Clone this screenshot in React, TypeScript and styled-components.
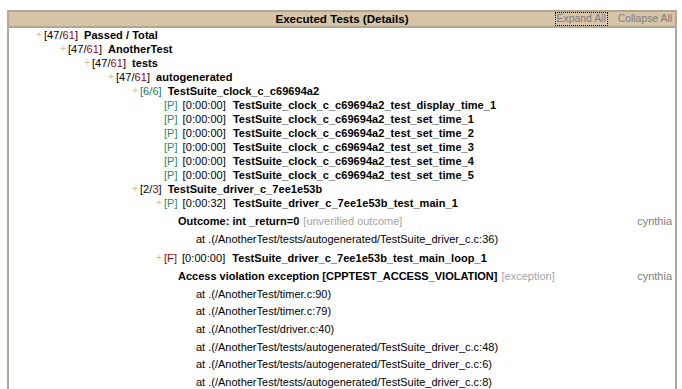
import React from 'react';
import styled, { createGlobalStyle } from 'styled-components';

const Global = createGlobalStyle`
  html, body { margin: 0; padding: 0; background: #fff; }
  body {
    font-family: "Liberation Sans", Arial, sans-serif;
    font-size: 11px;
    color: #000;
    overflow: hidden;
  }
`;

const Panel = styled.div`
  margin: 10px 0 0 7px;
  width: 670px;
  height: 420px;
  box-sizing: border-box;
  border-left: 2px solid #b8a793;
  border-right: 2px solid #b8a793;
  background: #fff;
`;

const Header = styled.div`
  display: grid;
  grid-template-columns: 1fr auto 1fr;
  align-items: center;
  height: 14px;
  background: #d6c4a8;
  border-top: 2px solid #b5a48e;
  border-bottom: 2px solid #b5a48e;
`;

const Title = styled.div`
  grid-column: 2;
  font-weight: bold;
  font-size: 11.6px;
  line-height: 14px;
`;

const Links = styled.div`
  grid-column: 3;
  justify-self: end;
  display: flex;
  align-items: center;
  gap: 10px;
  padding-right: 2px;
`;

const LinkButton = styled.span<{ $focused?: boolean }>`
  color: #7c7c7c;
  font-size: 10.4px;
  line-height: 12px;
  padding: 0 1px;
  outline: ${(p) => (p.$focused ? '1px dotted #000' : 'none')};
`;

const Tree = styled.div`
  display: flex;
  flex-direction: column;
`;

const Row = styled.div<{ $level: number }>`
  display: flex;
  align-items: center;
  height: 14px;
  line-height: 14px;
  white-space: nowrap;
  letter-spacing: 0.05px;
  padding-left: ${(p) => 27 + p.$level * 24}px;
`;

const Toggle = styled.span<{ $hidden?: boolean }>`
  width: 8px;
  flex: none;
  color: #cbbfb2;
  font-size: 10px;
  visibility: ${(p) => (p.$hidden ? 'hidden' : 'visible')};
`;

const Count = styled.span<{ $ok: boolean }>`
  margin-right: 6px;
  color: ${(p) => (p.$ok ? '#1f6f6a' : '#000')};
`;

const Total = styled.span<{ $ok: boolean }>`
  color: ${(p) => (p.$ok ? '#2e8b3a' : '#8b0a0a')};
`;

const Status = styled.span<{ $pass: boolean }>`
  margin-right: 5px;
  color: ${(p) => (p.$pass ? '#1f8a6a' : '#8b0a0a')};
`;

const Time = styled.span`
  margin-right: 7px;
`;

const Name = styled.span`
  font-weight: bold;
`;

const Details = styled.div<{ $last?: boolean }>`
  display: flex;
  flex-direction: column;
  padding: 2px 3px ${(p) => (p.$last ? 0 : 3)}px 169px;
`;

const MessageRow = styled.div`
  display: flex;
  align-items: center;
  justify-content: space-between;
  height: 18px;
  white-space: nowrap;
`;

const Message = styled.span`
  font-weight: bold;
`;

const Tag = styled.span`
  font-weight: normal;
  color: #a4a4a4;
  margin-left: 4px;
`;

const Author = styled.span`
  color: #7c7c7c;
`;

const StackRow = styled.div`
  display: flex;
  align-items: center;
  height: 17.7px;
  padding-left: 18px;
  white-space: nowrap;
`;

type Detail = { message: string; tag: string; author: string; stack: string[] };

const CountLabel = ({ pass, total }: { pass: number; total: number }) => {
  const ok = pass === total;
  return (
    <Count $ok={ok}>
      [{pass}/<Total $ok={ok}>{total}</Total>]
    </Count>
  );
};

const GroupRow = ({ level, pass, total, name }: { level: number; pass: number; total: number; name: string }) => (
  <Row $level={level}>
    <Toggle>+</Toggle>
    <CountLabel pass={pass} total={total} />
    <Name>{name}</Name>
  </Row>
);

const TestRow = ({
  level,
  pass,
  time,
  name,
  expandable,
}: {
  level: number;
  pass: boolean;
  time: string;
  name: string;
  expandable?: boolean;
}) => (
  <Row $level={level}>
    <Toggle $hidden={!expandable}>+</Toggle>
    <Status $pass={pass}>[{pass ? 'P' : 'F'}]</Status>
    <Time>[{time}]</Time>
    <Name>{name}</Name>
  </Row>
);

const DetailBlock = ({ detail, last }: { detail: Detail; last?: boolean }) => (
  <Details $last={last}>
    <MessageRow>
      <Message>
        {detail.message}
        <Tag>{detail.tag}</Tag>
      </Message>
      <Author>{detail.author}</Author>
    </MessageRow>
    {detail.stack.map((s) => (
      <StackRow key={s}>at .({s})</StackRow>
    ))}
  </Details>
);

const clockTests = [
  'TestSuite_clock_c_c69694a2_test_display_time_1',
  'TestSuite_clock_c_c69694a2_test_set_time_1',
  'TestSuite_clock_c_c69694a2_test_set_time_2',
  'TestSuite_clock_c_c69694a2_test_set_time_3',
  'TestSuite_clock_c_c69694a2_test_set_time_4',
  'TestSuite_clock_c_c69694a2_test_set_time_5',
];

const outcome: Detail = {
  message: 'Outcome: int _return=0',
  tag: '[unverified outcome]',
  author: 'cynthia',
  stack: ['/AnotherTest/tests/autogenerated/TestSuite_driver_c.c:36'],
};

const violation: Detail = {
  message: 'Access violation exception [CPPTEST_ACCESS_VIOLATION]',
  tag: '[exception]',
  author: 'cynthia',
  stack: [
    '/AnotherTest/timer.c:90',
    '/AnotherTest/timer.c:79',
    '/AnotherTest/driver.c:40',
    '/AnotherTest/tests/autogenerated/TestSuite_driver_c.c:48',
    '/AnotherTest/tests/autogenerated/TestSuite_driver_c.c:6',
    '/AnotherTest/tests/autogenerated/TestSuite_driver_c.c:8',
  ],
};

export default function App() {
  return (
    <>
      <Global />
      <Panel>
        <Header>
          <Title>Executed Tests (Details)</Title>
          <Links>
            <LinkButton $focused>Expand All</LinkButton>
            <LinkButton>Collapse All</LinkButton>
          </Links>
        </Header>
        <Tree>
          <GroupRow level={0} pass={47} total={61} name="Passed / Total" />
          <GroupRow level={1} pass={47} total={61} name="AnotherTest" />
          <GroupRow level={2} pass={47} total={61} name="tests" />
          <GroupRow level={3} pass={47} total={61} name="autogenerated" />
          <GroupRow level={4} pass={6} total={6} name="TestSuite_clock_c_c69694a2" />
          {clockTests.map((t) => (
            <TestRow key={t} level={5} pass time="0:00:00" name={t} />
          ))}
          <GroupRow level={4} pass={2} total={3} name="TestSuite_driver_c_7ee1e53b" />
          <TestRow level={5} pass time="0:00:32" name="TestSuite_driver_c_7ee1e53b_test_main_1" expandable />
          <DetailBlock detail={outcome} />
          <TestRow
            level={5}
            pass={false}
            time="0:00:00"
            name="TestSuite_driver_c_7ee1e53b_test_main_loop_1"
            expandable
          />
          <DetailBlock detail={violation} last />
        </Tree>
      </Panel>
    </>
  );
}
